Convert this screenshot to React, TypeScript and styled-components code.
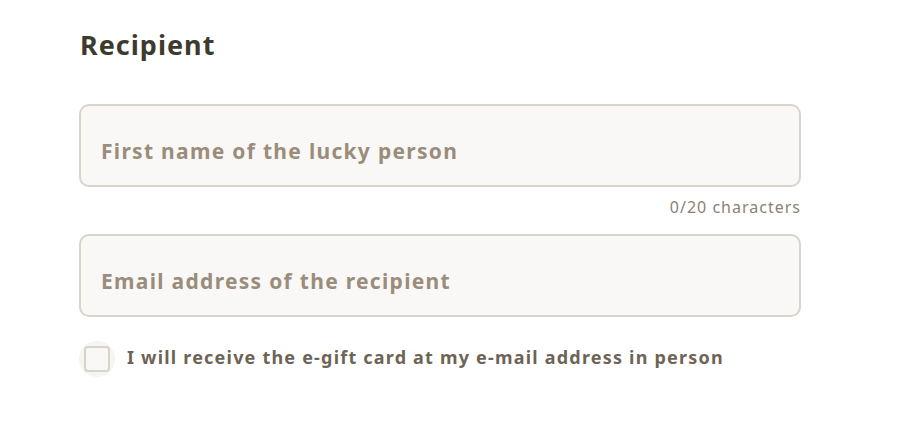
import { useState } from "react";
import styled, { createGlobalStyle } from "styled-components";

const GlobalStyle = createGlobalStyle`
  body {
    margin: 0;
    background: #ffffff;
    font-family: "Noto Sans", "Open Sans", sans-serif;
  }
`;

const Section = styled.section`
  width: 722px;
  padding: 28px 0 0 79px;
`;

const Heading = styled.h2`
  margin: 0 0 42px 1px;
  font-size: 27px;
  line-height: 34px;
  font-weight: 700;
  letter-spacing: 1px;
  color: #3d3a2e;
`;

const Field = styled.div`
  display: flex;
  flex-direction: column;
`;

const Input = styled.input`
  box-sizing: border-box;
  width: 100%;
  height: 83px;
  padding: 10px 20px 0;
  border: 2px solid #d8d4ca;
  border-radius: 10px;
  background: #f9f8f6;
  font-family: inherit;
  font-size: 21px;
  font-weight: 700;
  letter-spacing: 1.3px;
  color: #3d3a2e;
  outline: none;

  &::placeholder {
    color: #9a8d7b;
    opacity: 1;
  }
`;

const Counter = styled.div`
  align-self: flex-end;
  margin: 10px 0 17px;
  font-size: 16px;
  line-height: 20px;
  letter-spacing: 1px;
  color: #8c8273;
`;

const CheckRow = styled.label`
  display: flex;
  align-items: center;
  gap: 12px;
  margin-top: 24px;
  cursor: pointer;
`;

const Halo = styled.span`
  display: flex;
  align-items: center;
  justify-content: center;
  width: 36px;
  height: 36px;
  border-radius: 50%;
  background: #f6f5f2;
`;

const Box = styled.span<{ $checked: boolean }>`
  box-sizing: border-box;
  width: 26px;
  height: 26px;
  border: 2px solid #d8d4ca;
  border-radius: 4px;
  background: ${(p) => (p.$checked ? "#9a8d7b" : "#f9f8f6")};
`;

const CheckText = styled.span`
  margin-bottom: 5px;
  font-size: 18px;
  font-weight: 700;
  letter-spacing: 1.2px;
  color: #6d6456;
`;

export default function App() {
  const [name, setName] = useState("");
  const [checked, setChecked] = useState(false);
  return (
    <Section>
      <GlobalStyle />
      <Heading>Recipient</Heading>
      <Field>
        <Input
          maxLength={20}
          value={name}
          onChange={(e) => setName(e.target.value)}
          placeholder="First name of the lucky person"
        />
        <Counter>{name.length}/20 characters</Counter>
      </Field>
      <Input placeholder="Email address of the recipient" />
      <CheckRow onClick={() => setChecked(!checked)}>
        <Halo>
          <Box $checked={checked} />
        </Halo>
        <CheckText>I will receive the e-gift card at my e-mail address in person</CheckText>
      </CheckRow>
    </Section>
  );
}
